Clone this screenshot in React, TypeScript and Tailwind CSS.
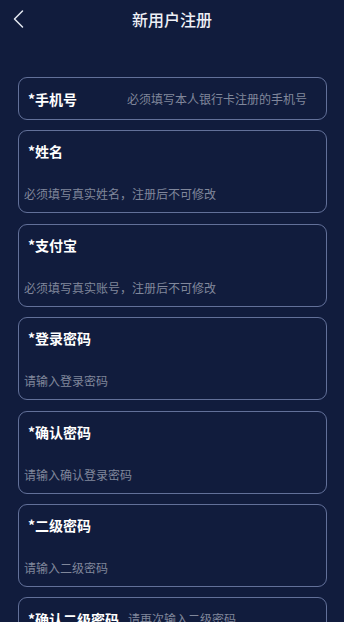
const FIELDS = [
  { label: '*姓名', hint: '必须填写真实姓名，注册后不可修改' },
  { label: '*支付宝', hint: '必须填写真实账号，注册后不可修改' },
  { label: '*登录密码', hint: '请输入登录密码' },
  { label: '*确认密码', hint: '请输入确认登录密码' },
  { label: '*二级密码', hint: '请输入二级密码' },
];

export default function App() {
  return (
    <div
      className="min-h-screen bg-[#111c3d] text-white"
      style={{ fontFamily: '"Noto Sans CJK SC", "Noto Sans", sans-serif' }}
    >
      {/* Header */}
      <div className="relative flex h-[38px] items-center justify-center">
        <svg className="absolute left-[12px] top-[9px] h-[20px] w-[12px]" viewBox="0 0 12 20" fill="none">
          <polyline points="10.5,2 2.5,10 10.5,18" stroke="#e6e9f2" strokeWidth="1.5" strokeLinecap="round" strokeLinejoin="round" />
        </svg>
        <h1 className="text-[16px] font-medium text-[#eef0f6]">新用户注册</h1>
      </div>

      <div className="flex flex-col gap-[10.4px] pl-[18px] pr-[17px] pt-[39px]">
        <div className="flex h-[43px] items-center rounded-[9px] border border-[#627099] pl-[9px]">
          <span className="w-[99px] shrink-0 text-[14px] font-bold leading-[20px]">*手机号</span>
          <span className="text-[12px] leading-[18px] text-[#80879b]">必须填写本人银行卡注册的手机号</span>
        </div>

        {FIELDS.map((f) => (
          <div
            key={f.label}
            className="flex h-[83px] flex-col justify-between rounded-[9px] border border-[#627099] pb-[10px] pl-[5px] pt-[10px]"
          >
            <span className="pl-[4px] text-[14px] font-bold leading-[20px]">{f.label}</span>
            <span className="text-[12px] leading-[17px] text-[#80879b]">{f.hint}</span>
          </div>
        ))}

        <div className="flex h-[43px] items-center rounded-[9px] border border-[#627099] pl-[9px]">
          <span className="w-[100px] shrink-0 text-[14px] font-bold leading-[20px]">*确认二级密码</span>
          <span className="text-[12px] leading-[18px] text-[#80879b]">请再次输入二级密码</span>
        </div>
      </div>
    </div>
  );
}
